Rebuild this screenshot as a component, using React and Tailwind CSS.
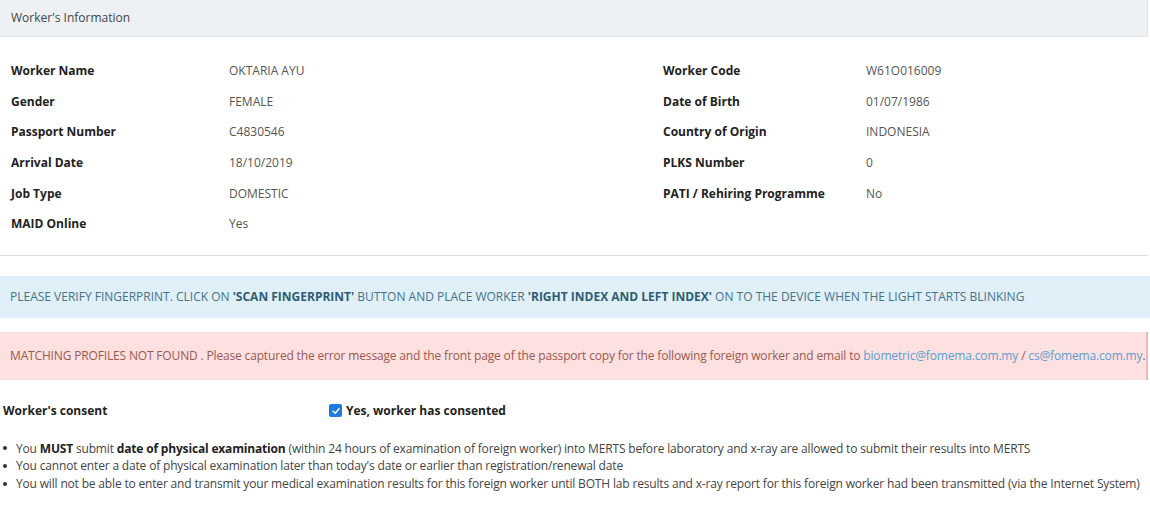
export default function App() {
  const left = [
    ['Worker Name', 'OKTARIA AYU'],
    ['Gender', 'FEMALE'],
    ['Passport Number', 'C4830546'],
    ['Arrival Date', '18/10/2019'],
    ['Job Type', 'DOMESTIC'],
    ['MAID Online', 'Yes'],
  ]
  const right = [
    ['Worker Code', 'W61O016009'],
    ['Date of Birth', '01/07/1986'],
    ['Country of Origin', 'INDONESIA'],
    ['PLKS Number', '0'],
    ['PATI / Rehiring Programme', 'No'],
  ]

  return (
    <div className="w-[1150px] h-[510px] overflow-hidden bg-white text-[#333] text-[12px]" style={{ fontFamily: '"Open Sans", "Liberation Sans", sans-serif' }}>
      <div className="w-[1148px]">
        <div className="h-[37px] bg-[#edf1f4] border-b border-r border-[#dfe3e6] flex items-center px-[11px] text-[#444]">
          Worker's Information
        </div>
        <div className="flex pt-[19px] pb-[15px] border-b border-[#dcdcdc]">
          <div className="w-[652px] pl-[11px]">
            {left.map(([k, v]) => (
              <div key={k} className="flex h-[30.6px] items-center">
                <div className="w-[218px] font-bold text-[#222]">{k}</div>
                <div className="text-[#555]">{v}</div>
              </div>
            ))}
          </div>
          <div className="flex-1 pl-[11px]">
            {right.map(([k, v]) => (
              <div key={k} className="flex h-[30.6px] items-center">
                <div className="w-[203px] font-bold text-[#222]">{k}</div>
                <div className="text-[#555]">{v}</div>
              </div>
            ))}
          </div>
        </div>
      </div>

      <div className="mt-[20px] h-[42px] bg-[#dff0f8] flex items-center px-[10px] text-[#4b7189]">
        <span>
          PLEASE VERIFY FINGERPRINT. CLICK ON <b className="text-[#2f5c73]">'SCAN FINGERPRINT'</b> BUTTON AND PLACE WORKER <b className="text-[#2f5c73]">'RIGHT INDEX AND LEFT INDEX'</b> ON TO THE DEVICE WHEN THE LIGHT STARTS BLINKING
        </span>
      </div>

      <div className="mt-[14px] w-[1148px] h-[48px] bg-[#fde0e0] flex items-center px-[10px] text-[#9a5a50] whitespace-nowrap overflow-hidden border-r-2 border-[#f1b8b8] tracking-[-0.16px]">
        <span>
          MATCHING PROFILES NOT FOUND . Please captured the error message and the front page of the passport copy for the following foreign worker and email to{' '}
          <span className="text-[#5b9fd0]">biometric@fomema.com.my</span> / <span className="text-[#5b9fd0]">cs@fomema.com.my</span>.
        </span>
      </div>

      <div className="flex items-center mt-[22px] pl-[3px]">
        <div className="w-[326px] font-bold text-[#222]">Worker's consent</div>
        <div className="flex items-center gap-[4px] font-bold text-[#222]">
          <span className="w-[13px] h-[13px] rounded-[2px] bg-[#1e7be0] flex items-center justify-center">
            <svg viewBox="0 0 12 12" className="w-[10px] h-[10px]">
              <path d="M2.5 6.2 L5 8.6 L9.6 3.4" fill="none" stroke="white" strokeWidth="1.8" strokeLinecap="round" strokeLinejoin="round" />
            </svg>
          </span>
          <span>Yes, worker has consented</span>
        </div>
      </div>

      <ul className="mt-[20px] pl-[3px] text-[#444] leading-[17.6px] tracking-[-0.17px] whitespace-nowrap">
        {[
          <>You <b className="text-[#222]">MUST</b> submit <b className="text-[#222]">date of physical examination</b> (within 24 hours of examination of foreign worker) into MERTS before laboratory and x-ray are allowed to submit their results into MERTS</>,
          <>You cannot enter a date of physical examination later than today's date or earlier than registration/renewal date</>,
          <>You will not be able to enter and transmit your medical examination results for this foreign worker until BOTH lab results and x-ray report for this foreign worker had been transmitted (via the Internet System)</>,
        ].map((t, i) => (
          <li key={i} className="flex">
            <span className="w-[13px] flex items-center">
              <span className="w-[4px] h-[4px] rounded-full bg-[#333]"></span>
            </span>
            <span>{t}</span>
          </li>
        ))}
      </ul>
    </div>
  )
}
